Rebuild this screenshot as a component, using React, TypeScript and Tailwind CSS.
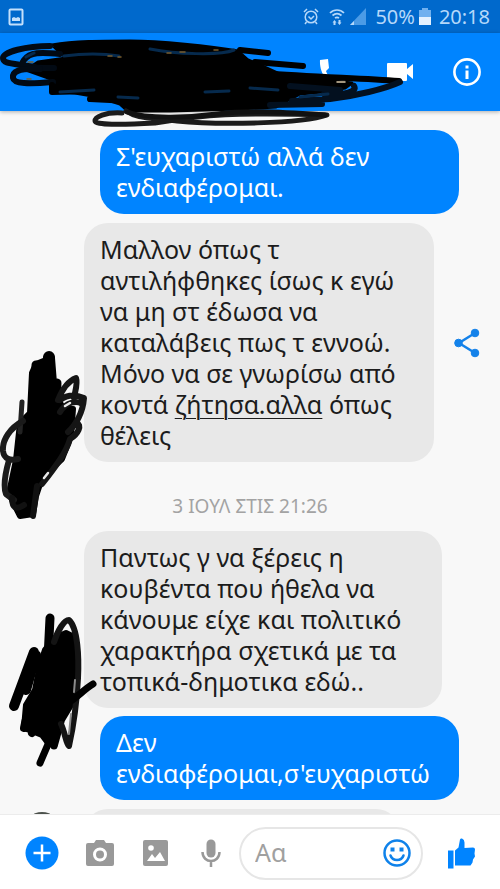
import type { ReactNode } from "react";

function Bubble({ mine, children }: { mine?: boolean; children: ReactNode }) {
  return (
    <p
      className={
        mine
          ? "flex-1 rounded-3xl bg-[#0084ff] px-4 py-[11px] text-white"
          : "flex-1 rounded-3xl bg-[#e8e8e8] px-4 py-[11px] text-[#1c1c1c]"
      }
    >
      {children}
    </p>
  );
}

function StatusBar() {
  return (
    <div className="flex h-[33px] shrink-0 items-center bg-[#0069cc] pr-2.5 pl-2 text-[#b5d8fa]">
      <svg viewBox="0 0 16 18" className="h-[18px] w-4" aria-hidden="true">
        <rect x="1.5" y="1.5" width="13" height="15" rx="1" fill="none" stroke="#c4e0fb" strokeWidth="2" />
        <path d="M4 13V10l2-1 2 1 2-1 2 1v3z" fill="#c4e0fb" />
      </svg>
      <div className="ml-auto flex items-center gap-1">
        <svg viewBox="0 0 16 17" className="mr-1.5 h-[17px] w-4" fill="none" stroke="currentColor" strokeWidth="1.5" aria-hidden="true">
          <circle cx="8" cy="9" r="5.8" />
          <path d="M1 4l3-3M15 4l-3-3M3.500 14L2 16M12.500 14L14 16M5.500 8.500L8 11l3-3" />
        </svg>
        <svg viewBox="0 0 16 18" className="h-[18px] w-4" fill="none" stroke="currentColor" strokeWidth="1.700" aria-hidden="true">
          <path d="M1 5c4-4 10-4 14 0M3.500 7.500c3-2.500 6-2.500 9 0M6 10c1.500-1 2.500-1 4 0" />
          <path d="M3.500 14.500L5.500 12l2 2.500h-1V17h-2v-2.500zM8.500 14.500h1V12h2v2.500h1L10.500 17z" fill="currentColor" stroke="none" />
        </svg>
        <svg viewBox="0 0 18 17" className="h-[17px] w-[18px]" aria-hidden="true">
          <path d="M17 0v17H1z" fill="#4b9be6" />
          <path d="M5 13v4H1z" fill="currentColor" />
        </svg>
        <span className="ml-1 text-xl leading-none">50%</span>
        <svg viewBox="0 0 12 17" className="h-[17px] w-3" aria-hidden="true">
          <path d="M3 0h6v2h3v7H0V2h3z" fill="#6fb0ef" />
          <path d="M0 9h12v8H0z" fill="#e3f1ff" />
        </svg>
        <span className="ml-1 text-xl leading-none">20:18</span>
      </div>
    </div>
  );
}

function Header() {
  return (
    <header className="relative z-10 flex h-[78px] shrink-0 items-center justify-end bg-[#0084ff] pr-[18px] text-white shadow-[0_1px_4px_rgba(0,0,0,0.3)]">
      <button type="button" aria-label="Call" className="mr-10">
        <svg viewBox="0 0 28 28" className="size-7" fill="currentColor" aria-hidden="true">
          <path d="M1 2l8-1 1 9-3 3c1 4 4 7 8 9l3-3 8 2v6C12 30 0 18 1 2z" />
        </svg>
      </button>
      <button type="button" aria-label="Video call" className="mr-[39px]">
        <svg viewBox="0 0 26 18" className="h-[18px] w-[26px]" fill="currentColor" aria-hidden="true">
          <path d="M1 0h18q1 0 1 1v5l6-5v15l-6-5v6q0 1-1 1H1q-1 0-1-1V1q0-1 1-1z" />
        </svg>
      </button>
      <button type="button" aria-label="Info">
        <svg viewBox="0 0 30 30" className="size-[30px]" aria-hidden="true">
          <circle cx="15" cy="15" r="12.600" fill="none" stroke="currentColor" strokeWidth="2.600" />
          <path d="M13.500 8.500h3v3h-3zM13.500 13.500h3v8.500h-3z" fill="currentColor" />
        </svg>
      </button>
      {/* name scribbled out */}
      <svg
        viewBox="0 36 410 94"
        className="pointer-events-none absolute top-[3px] left-0 h-[94px] w-[410px]"
        fill="none"
        stroke="#000"
        strokeWidth="6"
        strokeLinecap="round"
        strokeLinejoin="round"
        aria-hidden="true"
      >
        <path
          d="M52 45C75 41 100 41 130 41S210 46 238 51L248 60 262 66 280 74 325 80 352 83 345 88 322 92 300 94 285 102 276 107 240 109 170 111 128 111 120 104 98 97 75 93 53 91 54 80 26 70 38 62 66 58z"
          fill="#000"
          strokeWidth="3"
        />
        <path d="M50 46C26 46 3 52 3 58s8 5 32 9M60 54C40 52 30 52 24 60s8 8 30 8" stroke="#020a14" />
        <path d="M40 69C18 68 12 72 13 78s16 6 40 4" stroke="#020a14" />
        <path d="M52 85v7l38-1M90 99l40 2M240 50l28 3M255 62l48 4M262 73c50 4 95 5 137 8" />
        <path d="M400 82c-15 7-45 14-70 17l-38 2M354 86c4 6-10 9-30 8M270 105l52-1M290 86l50 4" stroke="#03101f" />
        <path d="M122 113C105 112 95 117 95 121s25 4 60 2c50-8 80-11 172-8-25 9-110 10-150 6s-42-4-51-10" stroke="#1b1b1b" strokeWidth="5" />
        <path d="M127 112c20 7 60 6 90 2s60-2 108 1" stroke="#111" strokeWidth="5" />
        <path d="M64 56q30-4 55 0M150 49c25 5 70 7 84 1M60 92l34-2M118 97l20 1M300 97l28-3M250 88l28 2M205 92l24-1M26 57l8-4" stroke="#062a4d" strokeWidth="3" />
        <path d="M108 56h4M118 57h3M167 53h4M180 52h5M214 50h4M28 62h5M27 79h4" stroke="#795c2c" strokeWidth="1.500" />
        <path d="M337 82h8" stroke="#d9c7a8" strokeWidth="1.500" />
      </svg>
    </header>
  );
}

function Composer() {
  return (
    <form className="relative z-20 flex h-[75px] shrink-0 items-center border-t border-[#ececec] bg-white pt-0.5 pr-6 pl-[25px]">
      <button type="button" aria-label="More">
        <svg viewBox="0 0 34 34" className="size-[34px]" aria-hidden="true">
          <circle cx="17" cy="17" r="16.500" fill="#0084ff" />
          <path d="M17 8.500v17M8.500 17h17" stroke="#fff" strokeWidth="2.500" />
        </svg>
      </button>
      <button type="button" aria-label="Camera" className="ml-[27px]">
        <svg viewBox="0 0 28 26" className="h-[26px] w-7" aria-hidden="true">
          <path d="M2 3h6l2-3h8l2 3h6q2 0 2 2v19q0 2-2 2H2q-2 0-2-2V5q0-2 2-2z" fill="#999" />
          <circle cx="14" cy="14.500" r="5.500" fill="none" stroke="#fff" strokeWidth="3" />
        </svg>
      </button>
      <button type="button" aria-label="Gallery" className="ml-[29px]">
        <svg viewBox="0 0 25 26" className="h-[26px] w-[25px]" aria-hidden="true">
          <rect width="25" height="26" rx="2" fill="#999" />
          <circle cx="8" cy="8" r="2.800" fill="#fff" />
          <path d="M4 21l5-7 3 4 5-6 5 9z" fill="#fff" />
        </svg>
      </button>
      <button type="button" aria-label="Voice" className="ml-[33px]">
        <svg viewBox="0 0 20 28" className="h-7 w-5" fill="none" stroke="#999" aria-hidden="true">
          <path d="M10 5v9" strokeWidth="9" strokeLinecap="round" />
          <path d="M1.500 13c0 12 17 12 17 0M10 21v7" strokeWidth="2.500" />
        </svg>
      </button>
      <div className="ml-[18px] flex h-[53px] min-w-0 flex-1 items-center rounded-full border-2 border-[#e6e6e6] pr-2.5 pl-3.5">
        <input
          type="text"
          aria-label="Αα"
          placeholder="Αα"
          className="w-full min-w-0 flex-1 bg-transparent text-[25px] outline-none placeholder:text-[#a0a0a0]"
        />
        <button type="button" aria-label="Emoji">
          <svg viewBox="0 0 28 28" className="size-7" fill="none" stroke="#0f82ea" strokeWidth="2.500" aria-hidden="true">
            <circle cx="14" cy="14" r="12.500" />
            <path d="M7.500 16.500c2 6 11 6 13 0" strokeLinecap="round" />
            <path d="M7.500 10.500h4M16.500 10.500h4" strokeWidth="4" />
          </svg>
        </button>
      </div>
      <button type="button" aria-label="Like" className="ml-6">
        <svg viewBox="0 0 29 31" className="h-[31px] w-[29px]" fill="#0084ff" aria-hidden="true">
          <path d="M1 12.500h5.500v18H1zM8 12.500l3.500-3 1.500-8Q13.500 0 15 .5q2.500 1 2.500 4V10l8.500-.5q2 0 2 2l-.5 4 .5 3-2 3-.5 3-2 3H8z" />
        </svg>
      </button>
    </form>
  );
}

export default function App() {
  return (
    <div className="flex h-screen flex-col bg-[#f8f8f8] font-['Noto_Sans',sans-serif]">
      <StatusBar />
      <Header />
      <main className="flex min-h-0 flex-1 flex-col overflow-hidden pt-[19px] text-[25px] leading-[31px]">
        <div className="flex shrink-0 pr-[41px] pl-[100px]">
          <Bubble mine>
            Σ'ευχαριστώ αλλά δεν
            <br />
            ενδιαφέρομαι.
          </Bubble>
        </div>

        <div className="relative mt-[9px] flex shrink-0 items-center pr-[18px] pl-[84px]">
          <svg
            viewBox="0 350 90 174"
            className="pointer-events-none absolute -bottom-15 left-0 h-[174px] w-[90px]"
            fill="none"
            stroke="#000"
            strokeWidth="6"
            strokeLinecap="round"
            strokeLinejoin="round"
            aria-hidden="true"
          >
            <path
              d="M32 375L36 366 46 362 52 360 54 385 58 386 59 403 63 410 73 411 71 438 62 461 48 474 40 486 36 498 33 516 20 518 14 506 9 495 16 462 20 425 30 415z"
              fill="#000"
            />
            <path d="M49 359l-1 34" strokeWidth="12" />
            <path d="M36 367v50M57 385l-2 30" strokeWidth="9" />
            <path d="M22 404l-2 30" stroke="#222" strokeWidth="5" />
            <path d="M58 402c4-10 10-19 18-22 2 6-1 13-2 20M60 402c8-6 17-5 24-2-1 14-8 27-16 34M60 414c6-10 17-12 22-8M76 424c7 3 2 12-6 17-4 14-14 27-28 45" stroke="#151515" />
            <path d="M23 423C10 430 2 442 3 453c1 8 7 10 15 8M9 462c-4 14-6 26-3 34l8 6" stroke="#1a1a1a" />
            <path d="M12 500c0 10 4 12 12 7M37 488l-4 30" stroke="#111" />
            <path d="M65 408l5-3M44 480l4-5" stroke="#e8e8e8" strokeWidth="2.500" />
          </svg>
          <Bubble>
            Μαλλον όπως τ
            <br />
            αντιλήφθηκες ίσως κ εγώ
            <br />
            να μη στ έδωσα να
            <br />
            καταλάβεις πως τ εννοώ.
            <br />
            Μόνο να σε γνωρίσω από
            <br />
            κοντά{" "}
            <a href="#" className="underline decoration-1 underline-offset-4">
              ζήτησα.αλλα
            </a>{" "}
            όπως
            <br />
            θέλεις
          </Bubble>
          <button type="button" aria-label="Share" className="ml-5">
            <svg viewBox="0 0 28 30" className="h-[30px] w-7" fill="#1482ea" stroke="#1482ea" aria-hidden="true">
              <path d="M21 5L5 15l16 10" fill="none" strokeWidth="2.500" />
              <circle cx="21" cy="5" r="3.800" />
              <circle cx="4.500" cy="15" r="3.800" />
              <circle cx="21" cy="25" r="3.800" />
            </svg>
          </button>
        </div>

        <time className="flex h-[69px] shrink-0 items-center justify-center pt-5 text-[19px] text-[#a3a3a3]">
          3 ΙΟΥΛ ΣΤΙΣ 21:26
        </time>

        <div className="relative flex shrink-0 pr-[58px] pl-[84px]">
          <Bubble>
            Παντως γ να ξέρεις η
            <br />
            κουβέντα που ήθελα να
            <br />
            κάνουμε είχε και πολιτικό
            <br />
            χαρακτήρα σχετικά με τα
            <br />
            τοπικά-δημοτικα εδώ..
          </Bubble>
          <svg
            viewBox="0 612 100 156"
            className="pointer-events-none absolute -bottom-15 left-0 h-[156px] w-[100px]"
            fill="none"
            stroke="#000"
            strokeWidth="6"
            strokeLinecap="round"
            strokeLinejoin="round"
            aria-hidden="true"
          >
            <path d="M45 650L55 638 66 633 72 636 76 650 74 670 71 688 71 705 62 720 55 745 48 743 42 735 32 731 24 728 26 705 35 690 40 665z" fill="#000" />
            <path d="M50 618l-3 60" strokeWidth="9" />
            <path d="M34 652L14 706M36 655L26 690" strokeWidth="10" />
            <path d="M24 728c3-16 7-24 14-32M32 733l6-10" strokeWidth="8" />
            <path d="M54 642c4-12 10-22 15-22 9 8 10 38 9 58s-5 50-9 68c-3-2-4-14-8-22" stroke="#141414" />
            <path d="M93 684c-10 6-16 14-27 20M52 735l-12 28M54 742v4" strokeWidth="7" />
            <path d="M71 714l-2 20M75 680l-1 12" stroke="#8b8b8b" strokeWidth="2" />
          </svg>
        </div>

        <div className="mt-2 flex shrink-0 pr-[41px] pl-[100px]">
          <Bubble mine>
            Δεν
            <br />
            ενδιαφέρομαι,σ'ευχαριστώ
          </Bubble>
        </div>

        {/* next message, cut off by the composer */}
        <div className="mt-[9px] flex shrink-0 pr-[100px] pl-[84px]">
          <div className="relative h-12 flex-1 rounded-3xl bg-[#e8e8e8]">
            <span className="absolute top-[3px] -left-[60px] size-9 rounded-full bg-[#4c514c]" />
          </div>
        </div>
      </main>
      <Composer />
    </div>
  );
}
